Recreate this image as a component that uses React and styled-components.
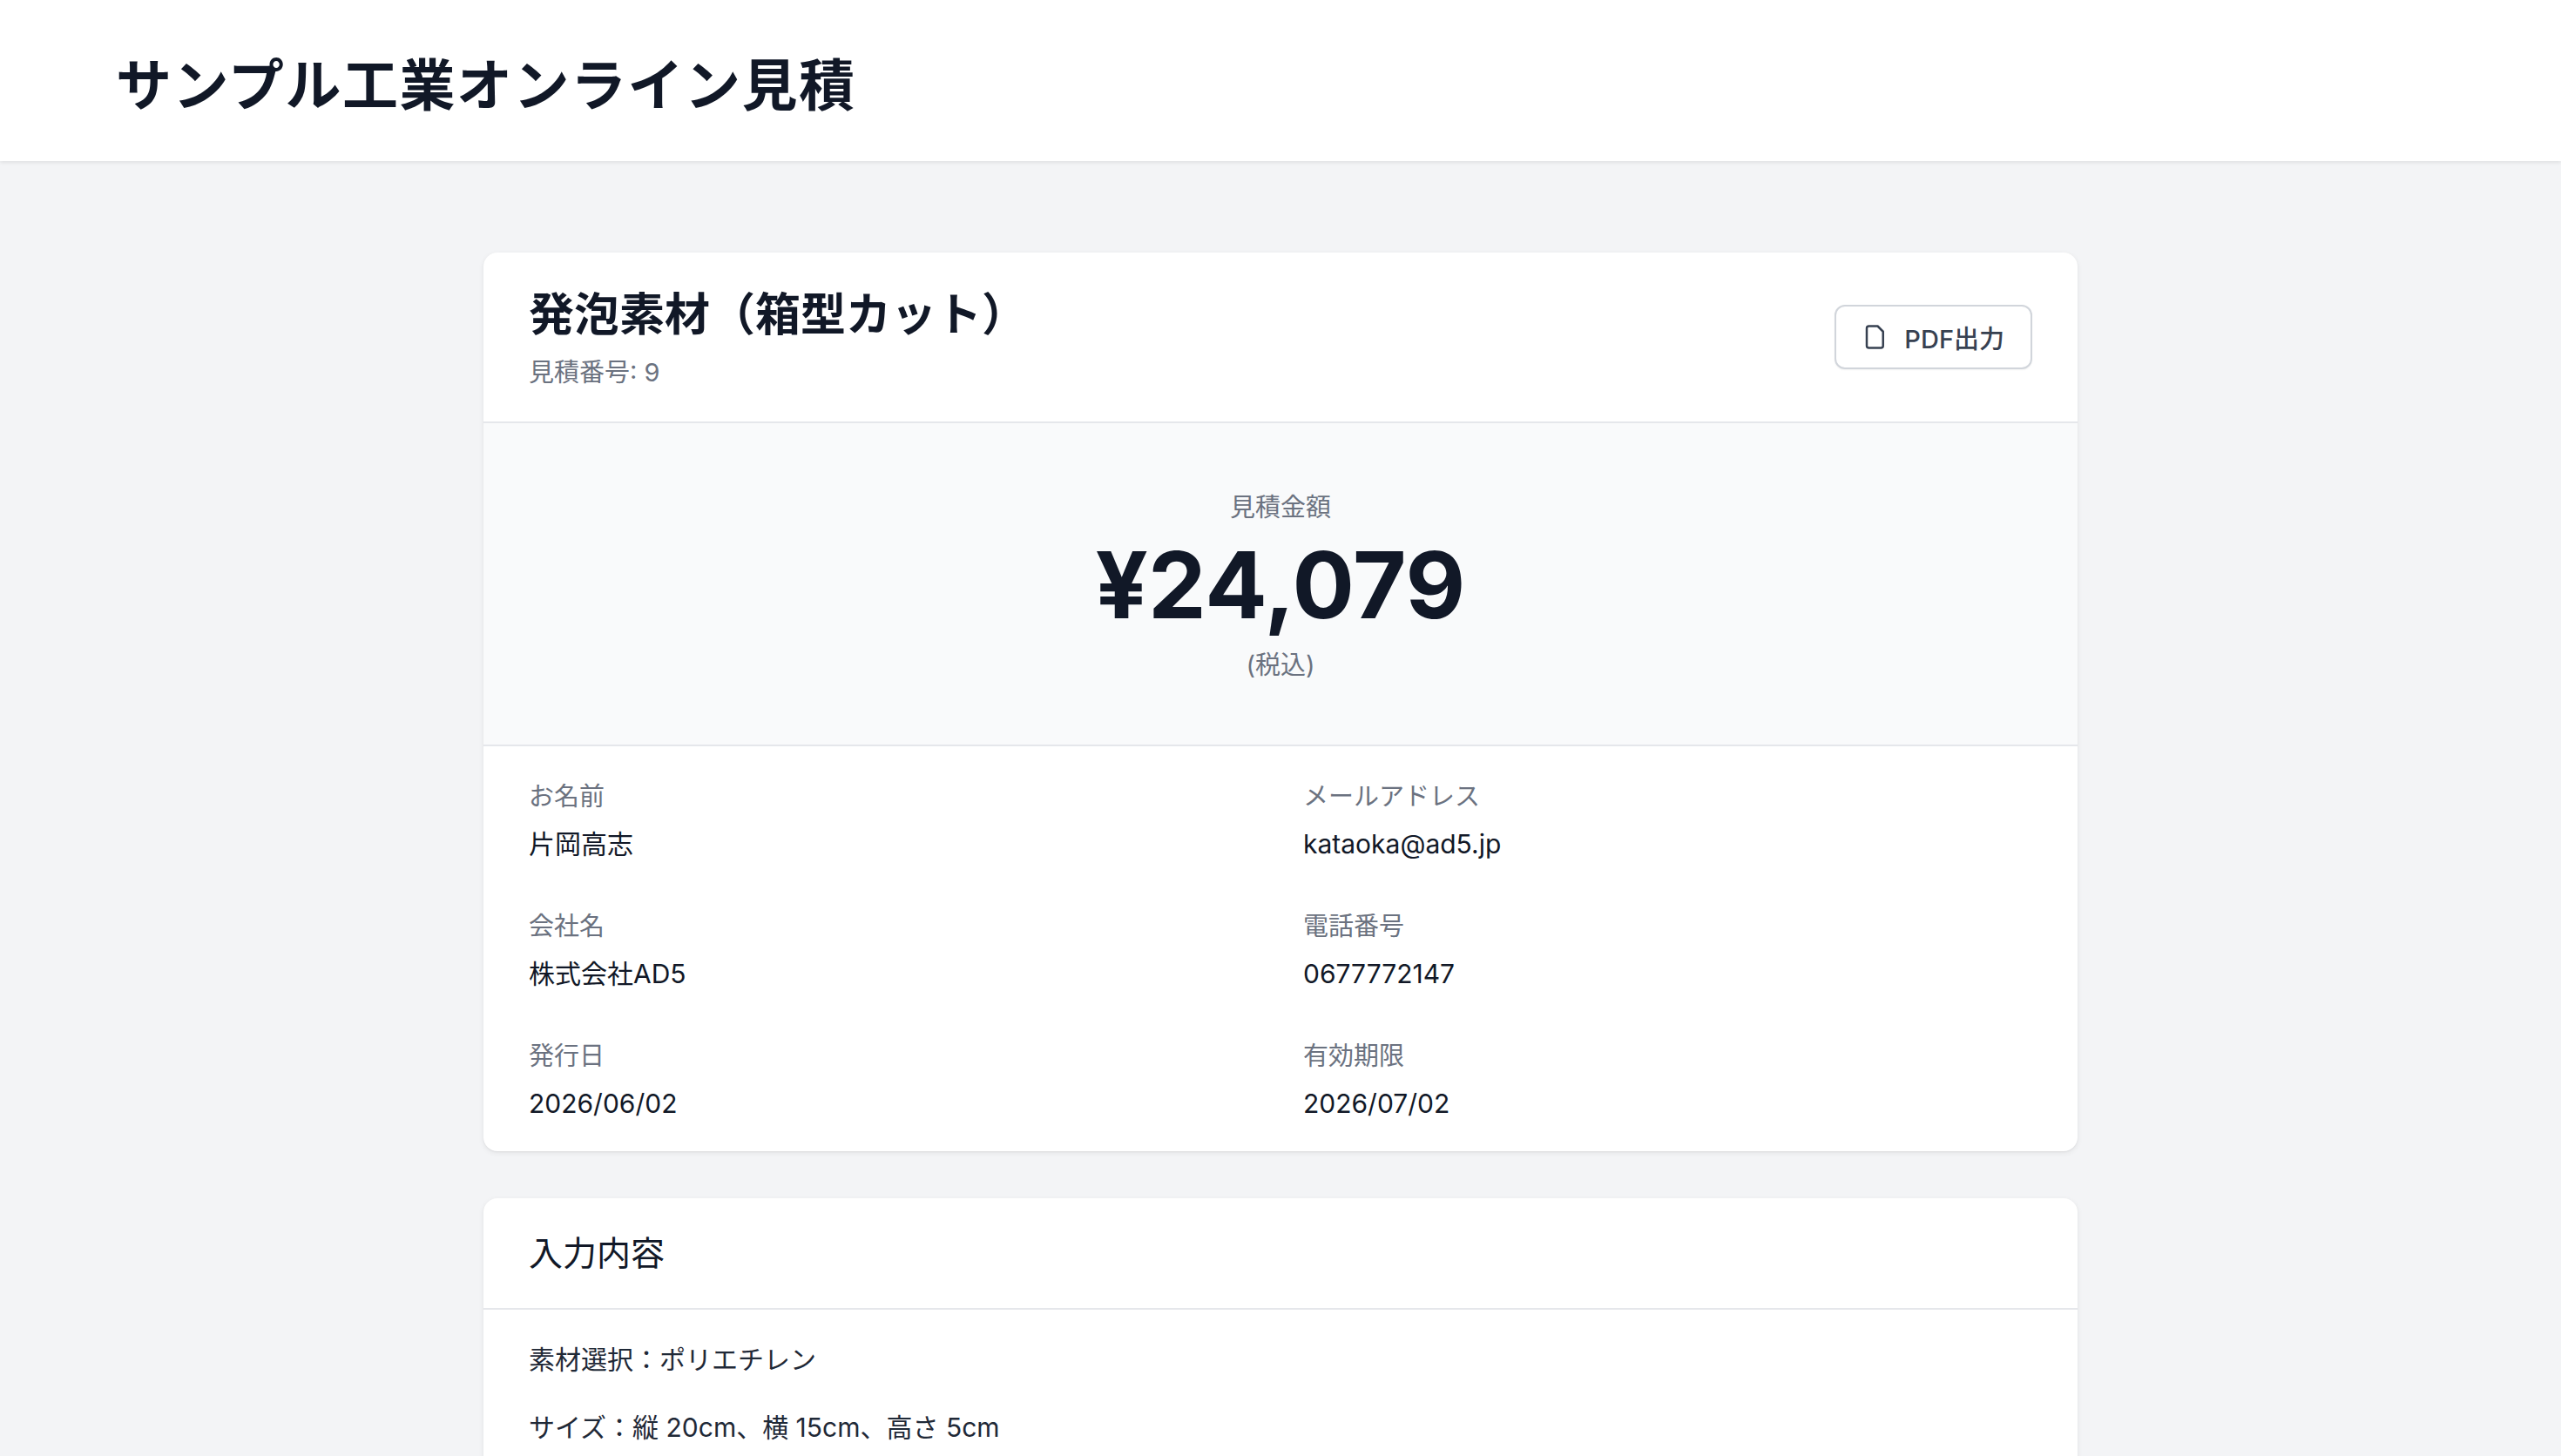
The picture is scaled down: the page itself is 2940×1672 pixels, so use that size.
import React from "react";
import styled, { createGlobalStyle } from "styled-components";

const Global = createGlobalStyle`
  html, body { margin: 0; padding: 0; background: #f3f4f6; }
  body { font-family: "Inter", "Noto Sans CJK JP", "Noto Sans", sans-serif; color: #111827; }
`;

const Header = styled.header`
  height: 185px; background: #fff; box-shadow: 0 2px 4px rgba(0,0,0,0.08);
  display: flex; align-items: center; padding: 0 133px; box-sizing: border-box;
`;
const Brand = styled.h1`
  margin: 0; font-size: 64px; font-weight: 700; color: #111827; letter-spacing: 1.5px;
`;
const Main = styled.main`
  width: 1830px; margin: 0 auto; padding-top: 105px; display: flex; flex-direction: column; gap: 54px;
`;
const Card = styled.section`
  background: #fff; border-radius: 16px; overflow: hidden;
  box-shadow: 0 2px 6px rgba(0,0,0,0.07), 0 1px 2px rgba(0,0,0,0.05);
`;
const CardHead = styled.div`
  display: flex; justify-content: space-between; align-items: center;
  padding: 0 52px; height: ${p => p.$h}px; border-bottom: 2px solid #e5e7eb; box-sizing: border-box;
`;
const Title = styled.h2`
  margin: 0; font-size: ${p => p.$size}px; font-weight: ${p => p.$weight}; color: #111827; line-height: 1.3;
`;
const Sub = styled.div`
  font-size: 29px; color: #6b7280; margin-top: 8px;
`;
const Button = styled.button`
  display: flex; align-items: center; gap: 18px; height: 74px; padding: 0 30px;
  background: #fff; border: 2px solid #d1d5db; border-radius: 12px;
  font-family: inherit; font-size: 29px; font-weight: 500; color: #374151;
  box-shadow: 0 1px 2px rgba(0,0,0,0.05);
`;
const Amount = styled.div`
  background: #f9fafb; height: 371px; border-bottom: 2px solid #e5e7eb; box-sizing: border-box;
  display: flex; flex-direction: column; align-items: center; justify-content: center;
`;
const Small = styled.div`font-size: 29px; color: #6b7280;`;
const Big = styled.div`
  font-family: "Inter", "Noto Sans CJK JP", sans-serif; font-size: 106px; font-weight: 700;
  color: #111827; line-height: 1.15; margin: 10px 0 8px;
`;
const Grid = styled.div`
  display: grid; grid-template-columns: 1fr 1fr; column-gap: 52px; row-gap: 41px;
  padding: 31px 52px 28px;
`;
const Label = styled.div`font-size: 29px; color: #6b7280; line-height: 54px;`;
const Value = styled.div`font-size: 30px; color: #111827; line-height: 54px;`;
const Body = styled.div`
  padding: 33px 52px; display: flex; flex-direction: column; gap: 34px;
  font-size: 30px; color: #1f2937;
`;

const FileIcon = () => (
  <svg width="30" height="30" viewBox="0 0 24 24" fill="none" stroke="#374151" strokeWidth="2" strokeLinecap="round" strokeLinejoin="round">
    <path d="M6 2h8l5 5v13a2 2 0 0 1-2 2H6a2 2 0 0 1-2-2V4a2 2 0 0 1 2-2z" />
  </svg>
);

const info = [
  ["お名前", "片岡高志"], ["メールアドレス", "kataoka@ad5.jp"],
  ["会社名", "株式会社AD5"], ["電話番号", "0677772147"],
  ["発行日", "2026/06/02"], ["有効期限", "2026/07/02"],
];

export default function App() {
  return (
    <>
      <Global />
      <Header><Brand>サンプル工業オンライン見積</Brand></Header>
      <Main>
        <Card>
          <CardHead $h={196}>
            <div>
              <Title $size={52} $weight={700}>発泡素材（箱型カット）</Title>
              <Sub>見積番号: 9</Sub>
            </div>
            <Button><FileIcon />PDF出力</Button>
          </CardHead>
          <Amount>
            <Small>見積金額</Small>
            <Big>¥24,079</Big>
            <Small>(税込)</Small>
          </Amount>
          <Grid>
            {info.map(([l, v]) => (
              <div key={l}><Label>{l}</Label><Value>{v}</Value></div>
            ))}
          </Grid>
        </Card>
        <Card>
          <CardHead $h={128}>
            <Title $size={39} $weight={400}>入力内容</Title>
          </CardHead>
          <Body>
            <div>素材選択：ポリエチレン</div>
            <div>サイズ：縦 20cm、横 15cm、高さ 5cm</div>
          </Body>
        </Card>
      </Main>
    </>
  );
}
